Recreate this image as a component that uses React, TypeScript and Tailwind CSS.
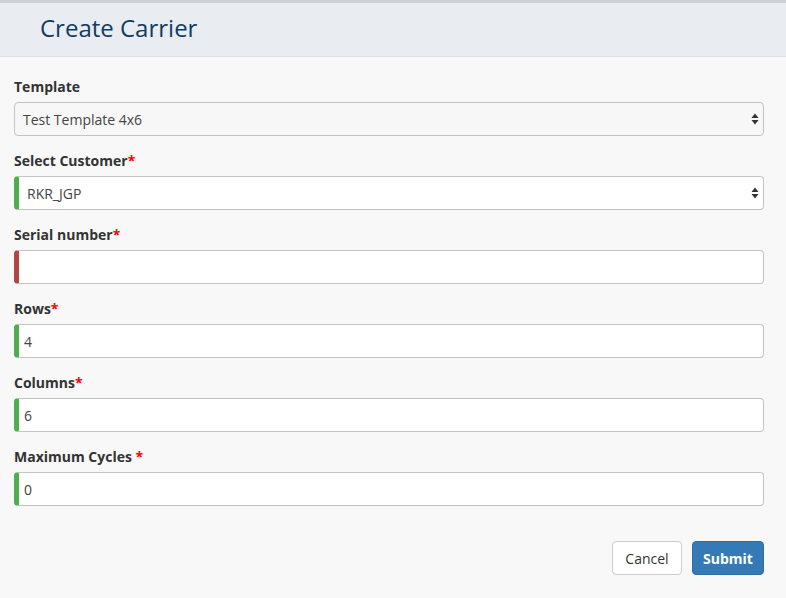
import React from "react";

const Arrows = () => (
  <svg width="8" height="12" viewBox="0 0 8 12" className="absolute right-[4px] top-1/2 -translate-y-1/2">
    <path d="M4 0.5 L7.5 5 L0.5 5 Z" fill="#333" />
    <path d="M4 11.5 L7.5 7 L0.5 7 Z" fill="#333" />
  </svg>
);

type Field = {
  label: string;
  required?: boolean;
  spaced?: boolean;
  value: string;
  select?: boolean;
  state?: "ok" | "error" | "none";
};

const fields: Field[] = [
  { label: "Template", value: "Test Template 4x6", select: true, state: "none" },
  { label: "Select Customer", required: true, value: "RKR_JGP", select: true, state: "ok" },
  { label: "Serial number", required: true, value: "", state: "error" },
  { label: "Rows", required: true, value: "4", state: "ok" },
  { label: "Columns", required: true, value: "6", state: "ok" },
  { label: "Maximum Cycles", required: true, spaced: true, value: "0", state: "ok" },
];

export default function App() {
  return (
    <div className="min-h-[598px] bg-[#f8f8f8] text-[14px] text-[#333]" style={{ fontFamily: '"Open Sans", sans-serif' }}>
      {/* Header */}
      <div className="h-[57px] bg-[#e9ecf0] border-b border-[#dde0e5] border-t-[3px] border-t-[#cdd0d5] flex items-center pl-10">
        <h1 className="text-[24px] text-[#0f3d63] leading-none -mt-1">Create Carrier</h1>
      </div>

      <div className="pl-[14px] pr-[22px] pt-5">
        {fields.map((f) => (
          <div key={f.label} className="mb-[15px]">
            <label className="block font-bold leading-5 mb-[5px]">
              {f.label}
              {f.required && (
                <span className="text-[#ff0000]">{f.spaced ? " *" : "*"}</span>
              )}
            </label>
            <div
              className={`relative h-[34px] flex items-center rounded-[4px] border border-[#c4c4c4] ${
                f.state === "ok"
                  ? "border-l-[5px] border-l-[#4cae4c] bg-white"
                  : f.state === "error"
                  ? "border-l-[5px] border-l-[#b04644] bg-white"
                  : "bg-[#f7f7f7]"
              } ${f.select ? "pl-[8px]" : "pl-[5px]"} text-[#444]`}
            >
              {f.value}
              {f.select && <Arrows />}
            </div>
          </div>
        ))}

        <div className="flex justify-end gap-[10px] pt-5">
          <button className="h-[34px] w-[70px] rounded-[4px] border border-[#ccc] bg-white text-[#333]">
            Cancel
          </button>
          <button className="h-[34px] w-[72px] rounded-[4px] border border-[#2e6da4] bg-[#337ab7] text-white font-bold">
            Submit
          </button>
        </div>
      </div>
    </div>
  );
}
